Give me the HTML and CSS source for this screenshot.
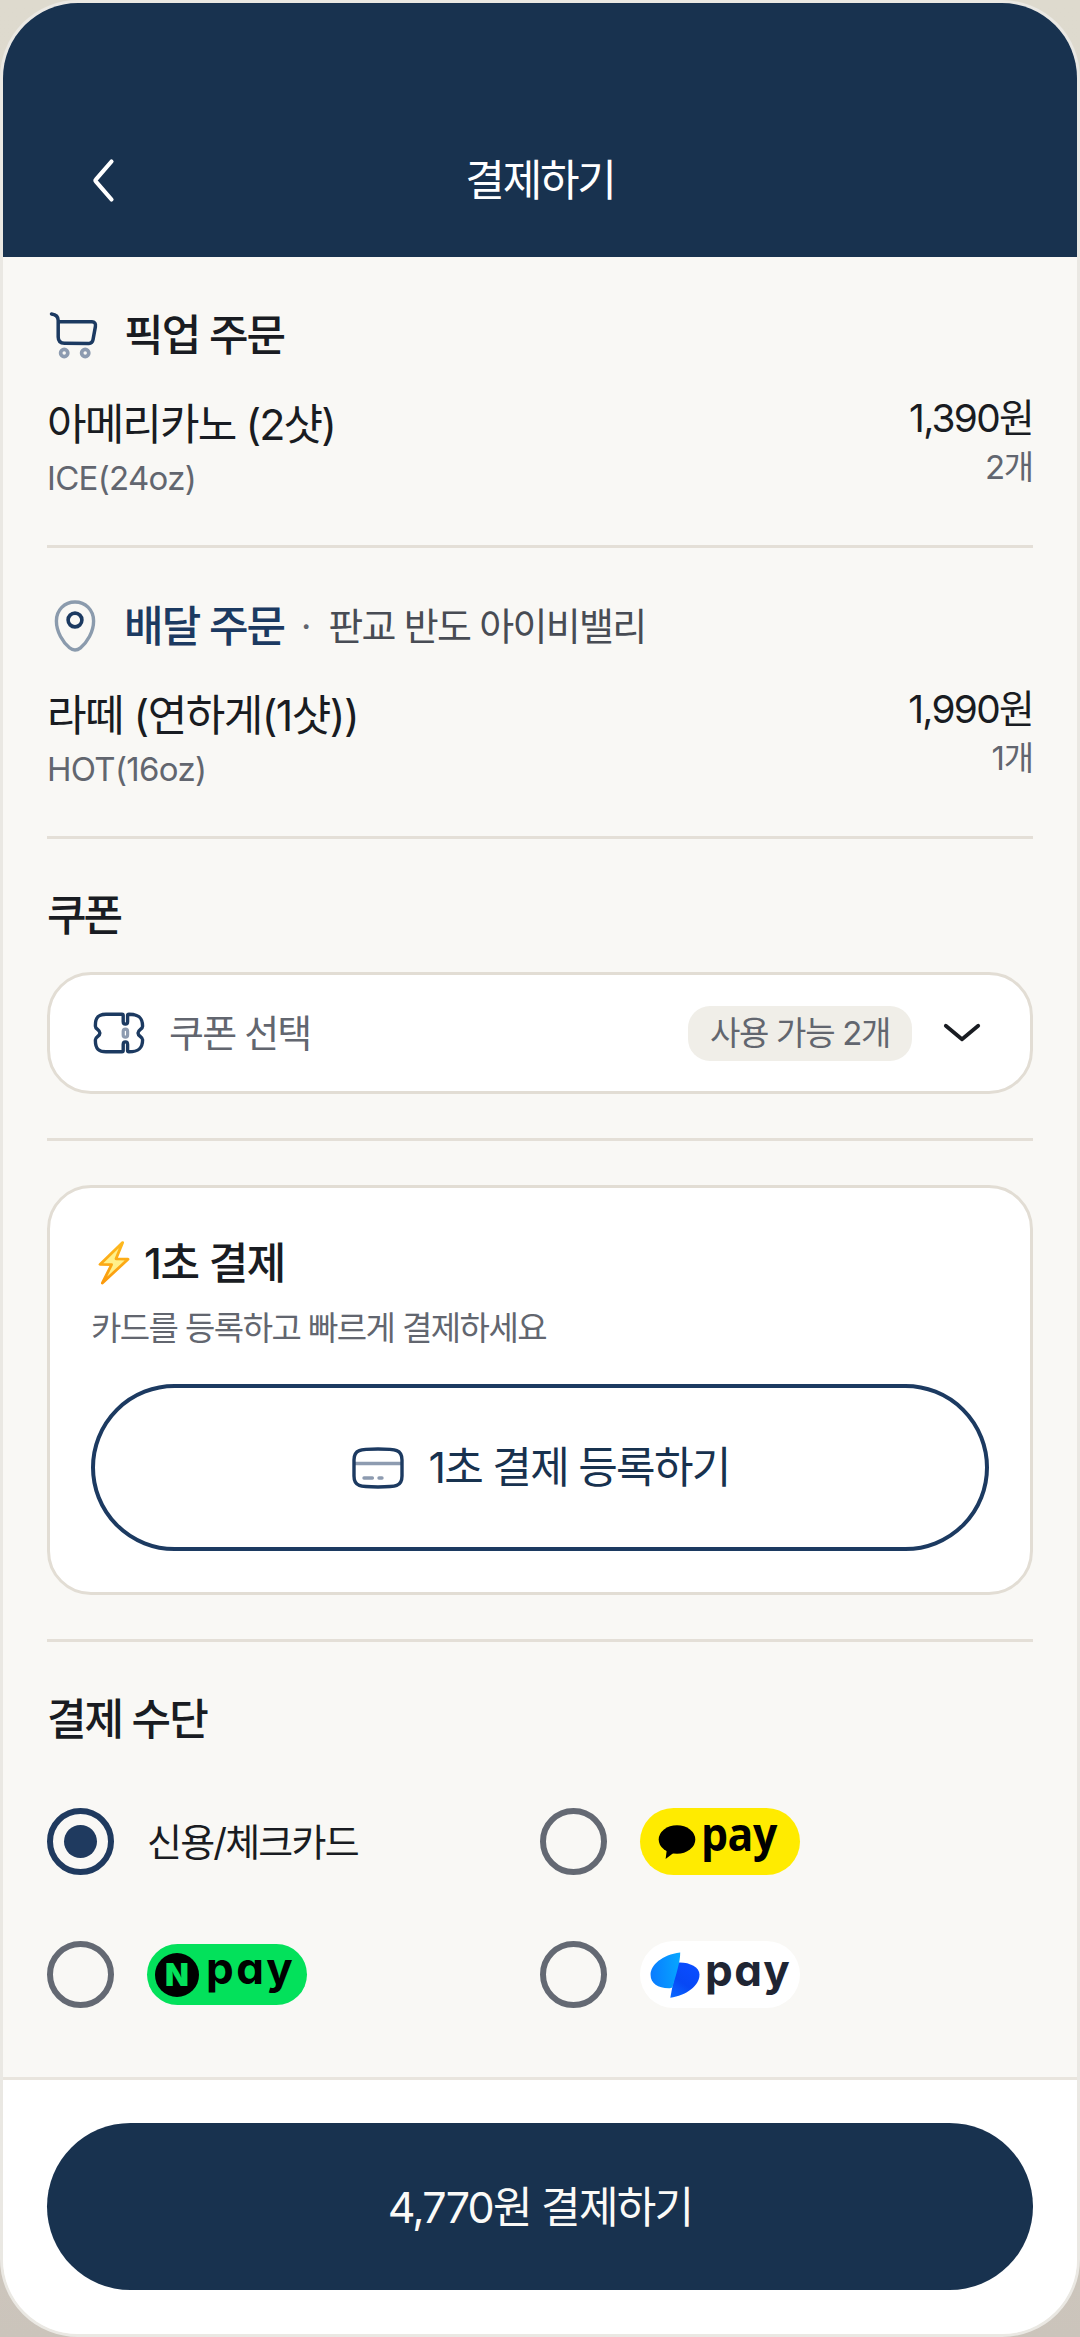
FILE: index.html
```html
<!DOCTYPE html>
<html lang="ko">
<head>
<meta charset="utf-8">
<title>결제하기</title>
<link rel="stylesheet" href="styles.css">
</head>
<body>
<div class="phone">
  <header class="topbar">
    <svg class="back" viewBox="0 0 24 48"><path d="M20.5 5.5 L5 23.4 Q4 24.5 5 25.6 L20.5 43.5" fill="none" stroke="#fff" stroke-width="4.2" stroke-linecap="round"/></svg>
    <h1>결제하기</h1>
  </header>

  <main class="content">
    <section class="order">
      <div class="order-head">
        <svg class="icon" viewBox="0 0 56 56" fill="none" stroke-linecap="round" stroke-linejoin="round">
          <path d="M4.5 7 C9 7.6 11.2 9.4 11.2 13.5 V30 C11.2 34.4 13.5 36.2 17.5 36.2 L42 36.4 C44.4 36.4 45.6 35 46 32.8 L48.4 19.6 C49 16.4 47.5 14.8 45 14.8 H11.6" stroke="#1c3a61" stroke-width="3.5"/>
          <circle cx="17.2" cy="46" r="3.6" stroke="#8d9bb0" stroke-width="3.7"/>
          <circle cx="38.2" cy="46" r="3.6" stroke="#8d9bb0" stroke-width="3.7"/>
        </svg>
        <h2 class="tight">픽업 주문</h2>
      </div>
      <div class="item">
        <div class="item-info">
          <span class="item-name">아메리카노 (2샷)</span>
          <span class="item-option">ICE(24oz)</span>
        </div>
        <div class="item-sum">
          <span class="price">1,390원</span>
          <span class="qty">2개</span>
        </div>
      </div>
    </section>

    <section class="order">
      <div class="order-head">
        <svg class="icon" viewBox="0 0 56 56" fill="none">
          <path d="M28 4 C17.5 4 9.4 12 9.4 23 C9.4 34 16 44.5 22.5 49.8 Q28 54.2 33.5 49.8 C40 44.5 46.6 34 46.6 23 C46.6 12 38.5 4 28 4 Z" stroke="#8b9bad" stroke-width="3.4"/>
          <circle cx="28" cy="22" r="6.9" stroke="#1c3a61" stroke-width="3.6"/>
        </svg>
        <h2 class="tight delivery">배달 주문</h2>
        <span class="dot">·</span>
        <span class="place">판교 반도 아이비밸리</span>
      </div>
      <div class="item">
        <div class="item-info">
          <span class="item-name latte">라떼 (연하게(1샷))</span>
          <span class="item-option">HOT(16oz)</span>
        </div>
        <div class="item-sum">
          <span class="price">1,990원</span>
          <span class="qty">1개</span>
        </div>
      </div>
    </section>

    <section class="coupon">
      <h2 class="tighter">쿠폰</h2>
      <div class="select">
        <svg class="ticket" viewBox="0 0 52 44" fill="none" stroke-linecap="round" stroke-linejoin="round">
          <path d="M29 3.2 H13 C6 3.2 2.4 6 2.4 14 V15.2 C2.4 18.3 6.9 18.4 6.9 22 C6.9 25.6 2.4 25.7 2.4 28.8 V30 C2.4 38 6 40.8 13 40.8 H29 C29.8 40.8 30.2 40.4 30.2 39.5 V33.5 C30.2 30 34.6 30 34.6 33.5 V39.5 C34.6 40.4 35 40.8 36 40.8 C45 40.8 49.6 38 49.6 28.8 C49.6 25.7 45 25.6 45 22 C45 18.4 49.6 18.3 49.6 15.2 C49.6 6 45 3.2 36 3.2 C35 3.2 34.6 3.6 34.6 4.5 V10.5 C34.6 14 30.2 14 30.2 10.5 V4.5 C30.2 3.6 29.8 3.2 29 3.2 Z" stroke="#1c3a61" stroke-width="3.4"/>
          <rect x="30.2" y="18.2" width="4.4" height="8" rx="2.2" stroke="#8d9bb0" stroke-width="3.2"/>
        </svg>
        <span class="select-label">쿠폰 선택</span>
        <span class="badge">사용 가능 2개</span>
        <svg class="chevron" viewBox="0 0 40 22"><path d="M3.8 3.8 L20 17.2 L36.2 3.8" fill="none" stroke="#191c22" stroke-width="3.8" stroke-linecap="round" stroke-linejoin="round"/></svg>
      </div>
    </section>

    <section class="quick">
      <div class="card">
        <div class="card-head">
          <svg class="bolt" viewBox="0 0 34 46">
            <defs><linearGradient id="boltEdge" x1="0" y1="0" x2="0" y2="1"><stop offset="0" stop-color="#fdb91f"/><stop offset="1" stop-color="#fb9a0c"/></linearGradient></defs>
            <path d="M25.6 2.6 L3 24.4 L14.6 24.6 L5.4 43 L31 19.2 L19 18.8 Z" fill="#fff08a" stroke="url(#boltEdge)" stroke-width="2.8" stroke-linejoin="round"/>
          </svg>
          <h2 class="quick-title">1초 결제</h2>
        </div>
        <p class="card-desc">카드를 등록하고 빠르게 결제하세요</p>
        <button class="outline">
          <svg class="credit" viewBox="0 0 52 42" fill="none" stroke-linecap="round">
            <path d="M2 16.5 H50" stroke="#8d9bb0" stroke-width="3.4" stroke-linecap="butt"/>
            <path d="M12 31 H20.4 M27 31 H30" stroke="#8d9bb0" stroke-width="3.4"/>
            <path d="M26 2 C44 2 50 2.5 50 13 V29 C50 39.5 44 40 26 40 C8 40 2 39.5 2 29 V13 C2 2.5 8 2 26 2 Z" stroke="#1c3a61" stroke-width="3.4"/>
          </svg>
          <span>1초 결제 등록하기</span>
        </button>
      </div>
    </section>

    <section class="methods">
      <h2 class="methods-title">결제 수단</h2>
      <div class="grid">
        <div class="method"><span class="radio on"></span><span class="method-label">신용/체크카드</span></div>
        <div class="method"><span class="radio"></span>
          <span class="pill kakao">
            <svg class="bubble" viewBox="0 0 38 36"><ellipse cx="19" cy="15.5" rx="18.3" ry="14.3"/><path d="M9 24 L7.6 35 L18 27 Z"/></svg>
            <span class="pay">pay</span>
          </span>
        </div>
        <div class="method"><span class="radio"></span>
          <span class="pill naver">
            <span class="n-mark">N</span>
            <span class="pay">pay</span>
          </span>
        </div>
        <div class="method"><span class="radio"></span>
          <span class="pill toss">
            <svg class="toss-mark" viewBox="0 0 50 46">
              <defs>
                <linearGradient id="tossA" x1="0" y1="0.5" x2="1" y2="0.4"><stop offset="0" stop-color="#0a7cff"/><stop offset="1" stop-color="#06a6ff"/></linearGradient>
                <linearGradient id="tossB" x1="0" y1="1" x2="0.6" y2="0"><stop offset="0" stop-color="#0b6bff"/><stop offset="0.5" stop-color="#0748f5"/><stop offset="1" stop-color="#0a4dff"/></linearGradient>
              </defs>
              <path d="M27 10.6 C38 9.6 49.5 14.5 49.5 22.5 C49.5 34 36 43.5 20.3 45.8 Z" fill="url(#tossB)"/>
              <path d="M30.2 0.6 C12 3 0.6 13 0.6 23 C0.6 31.5 8.5 36.6 20 36.2 L22.5 35.6 C25.5 24 30.4 10.5 30.2 0.6 Z" fill="url(#tossA)"/>
            </svg>
            <span class="pay">pay</span>
          </span>
        </div>
      </div>
    </section>
  </main>

  <footer class="footer">
    <button class="primary">4,770원 결제하기</button>
  </footer>
</div>
</body>
</html>
```
FILE: styles.css
```css
* { box-sizing: border-box; margin: 0; padding: 0; }

body {
  width: 1080px;
  height: 2337px;
  overflow: hidden;
  background: linear-gradient(180deg, #dedace 0%, #dbd6cb 60%, #cbc4bb 100%);
  font-family: "Inter", "Noto Sans CJK KR", sans-serif;
  font-weight: 400;
  color: #191c22;
  white-space: nowrap;
}

button { font: inherit; background: none; border: 0; }

.phone {
  width: 1080px;
  height: 2337px;
  display: flex;
  flex-direction: column;
  border: 3px solid #eae8e3;
  border-radius: 78px;
  background: #f9f8f5;
  overflow: hidden;
}

.topbar {
  height: 254px;
  padding: 147px 84px 0 88px;
  display: grid;
  grid-template-columns: 24px 1fr 28px;
  background: #18324f;
  color: #fff;
}
.back { width: 24px; height: 48px; margin-top: 6px; }
.topbar h1 {
  font-size: 43px;
  line-height: 60px;
  font-weight: 400;
  letter-spacing: -2.2px;
  text-align: center;
}

.content { padding: 0 44px; flex: 1; }

h2 { font-size: 43px; font-weight: 500; line-height: 60px; }
.tight { letter-spacing: -1.9px; }
.tighter { letter-spacing: -3px; line-height: 57px; }

.order, .coupon, .quick { border-bottom: 3px solid #e4dfd7; }

.order { height: 291px; padding-top: 48px; }
.order-head { display: flex; align-items: center; height: 60px; }
.icon { width: 56px; height: 56px; margin-right: 21px; }
.delivery { color: #1c3a61; }
.dot { width: 44px; text-align: center; font-size: 36px; color: #61656e; line-height: 60px; }
.place { font-size: 38px; line-height: 60px; letter-spacing: -1.7px; color: #484c54; }

.item { display: flex; justify-content: space-between; margin-top: 28px; }
.item-info, .item-sum { display: flex; flex-direction: column; }
.item-sum { text-align: right; }
.item-name { font-size: 43px; line-height: 62px; letter-spacing: -1.9px; }
.latte { letter-spacing: -1.55px; }
.item-option { font-size: 33px; line-height: 46px; letter-spacing: -0.7px; color: #62666f; }
.price { font-size: 38.8px; line-height: 50px; letter-spacing: -1.7px; }
.qty { font-size: 33px; line-height: 48px; letter-spacing: -1.2px; color: #62666f; }

.coupon { padding: 48px 0 44px; }
.select {
  display: flex;
  align-items: center;
  height: 122px;
  margin-top: 28px;
  padding: 0 48px 0 43px;
  background: #fff;
  border: 3px solid #e2ddd4;
  border-radius: 44px;
}
.ticket { width: 52px; height: 44px; margin-right: 24px; }
.select-label { flex: 1; font-size: 38px; line-height: 60px; letter-spacing: -1.8px; color: #62666f; }
.badge {
  width: 224px;
  height: 55px;
  padding-left: 22px;
  border-radius: 22px;
  background: #f0eee8;
  font-size: 33px;
  line-height: 54px;
  letter-spacing: -1.3px;
  color: #62666f;
}
.chevron { width: 40px; height: 22px; margin-left: 30px; }

.quick { padding: 44px 0; }
.card {
  height: 410px;
  padding: 45px 41px 0;
  background: #fff;
  border: 3px solid #e2ddd4;
  border-radius: 44px;
}
.card-head { display: flex; align-items: center; height: 60px; }
.bolt { width: 34px; height: 46px; margin: 0 13px 0 6px; }
.quick-title { letter-spacing: -1.4px; }
.card-desc { margin-top: 12px; font-size: 33px; line-height: 46px; letter-spacing: -1.57px; color: #62666f; }
.outline {
  display: flex;
  align-items: center;
  justify-content: center;
  width: 100%;
  height: 167px;
  margin-top: 33px;
  padding-left: 2px;
  border: 4px solid #1c3a61;
  border-radius: 84px;
  font-size: 43px;
  line-height: 60px;
  letter-spacing: -1.75px;
  color: #18324f;
}
.outline span { margin-top: -2px; }
.credit { width: 52px; height: 42px; margin-right: 24px; }

.methods { padding-top: 48px; }
.methods-title { line-height: 58px; letter-spacing: -2px; }
.grid {
  display: grid;
  grid-template-columns: 493px 493px;
  grid-auto-rows: 67px;
  row-gap: 66px;
  margin-top: 60px;
}
.method { display: flex; align-items: center; }
.radio {
  display: flex;
  align-items: center;
  justify-content: center;
  width: 67px;
  height: 67px;
  margin-right: 33px;
  border: 6px solid #646973;
  border-radius: 50%;
}
.radio.on { border-color: #1f3a5f; }
.radio.on::after { content: ""; width: 33px; height: 33px; border-radius: 50%; background: #1f3a5f; }
.method-label { font-size: 38px; line-height: 60px; letter-spacing: -1.8px; }

.pill { display: flex; align-items: center; width: 160px; height: 67px; border-radius: 34px; }
.pay { display: block; }
.kakao { padding-left: 18px; background: #ffeb00; color: #000; }
.bubble { width: 38px; height: 36px; margin-right: 5px; }
.kakao .pay {
  font-family: "Open Sans", sans-serif;
  font-weight: 700;
  font-size: 47px;
  line-height: 60px;
  letter-spacing: -0.5px;
  margin-top: -17px;
  transform: scaleX(0.91);
  transform-origin: left;
}
.naver { height: 61px; padding-left: 8px; background: #03e15b; color: #000; }
.n-mark {
  width: 44px;
  height: 44px;
  margin-right: 7px;
  border-radius: 50%;
  background: #000;
  color: #03e15b;
  font-size: 31px;
  font-weight: 900;
  line-height: 44px;
  text-align: center;
}
.naver .pay, .toss .pay {
  font-weight: 700;
  font-size: 44px;
  line-height: 60px;
  letter-spacing: 2.4px;
  font-feature-settings: "cv11";
  margin-top: -13px;
}
.toss { padding-left: 10px; background: #fff; }
.toss-mark { width: 50px; height: 46px; margin-right: 5px; }
.toss .pay { color: #1f2533; margin-top: -9px; letter-spacing: 1.4px; }

.footer {
  height: 257px;
  padding: 43px 44px 0;
  border-top: 3px solid #e9e5de;
  background: #fff;
}
.primary {
  display: block;
  width: 100%;
  height: 167px;
  border-radius: 84px;
  background: #18324f;
  color: #fbfaf7;
  font-size: 43px;
  line-height: 60px;
  letter-spacing: -1.75px;
}
```
